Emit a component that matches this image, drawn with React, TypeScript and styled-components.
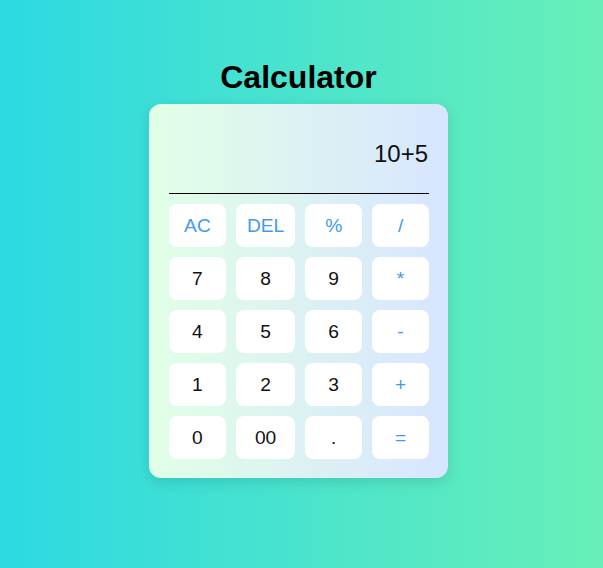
import React from "react";
import styled, { createGlobalStyle } from "styled-components";

const Global = createGlobalStyle`
  html, body { margin: 0; padding: 0; }
  body {
    font-family: "Liberation Sans", Arial, sans-serif;
    background: linear-gradient(to right, #2cd9e2, #68efb8);
    min-height: 568px;
  }
`;

const Page = styled.main`
  min-height: 568px;
  display: flex;
  flex-direction: column;
  align-items: center;
  padding: 59px 6px 0 0;
  box-sizing: border-box;
`;

const Title = styled.h1`
  margin: 0 0 8px;
  font-size: 32px;
  line-height: 37px;
  font-weight: 700;
  color: #000;
`;

const Card = styled.div`
  width: 299px;
  box-sizing: border-box;
  padding: 20px 19px 19px 20px;
  border-radius: 12px;
  background: linear-gradient(to right, #e1ffe6, #d8e5ff);
  box-shadow: 0 4px 14px rgba(0, 0, 0, 0.12);
`;

const Display = styled.div`
  padding: 16px 1px 25px 0;
  text-align: right;
  font-size: 24px;
  line-height: 28px;
  color: #111;
  border-bottom: 1px solid #000;
  margin-bottom: 10px;
`;

const Keys = styled.div`
  display: grid;
  grid-template-columns: repeat(4, 1fr);
  gap: 10px;
`;

const Key = styled.button<{ $op?: boolean }>`
  font-family: "Liberation Sans", Arial, sans-serif;
  font-size: 19.2px;
  line-height: 23px;
  padding: 10px 11px;
  border: none;
  border-radius: 8px;
  background: #fff;
  color: ${(p) => (p.$op ? "#409bee" : "#111")};
  cursor: pointer;
`;

const keys: { label: string; op?: boolean }[] = [
  { label: "AC", op: true },
  { label: "DEL", op: true },
  { label: "%", op: true },
  { label: "/", op: true },
  { label: "7" },
  { label: "8" },
  { label: "9" },
  { label: "*", op: true },
  { label: "4" },
  { label: "5" },
  { label: "6" },
  { label: "-", op: true },
  { label: "1" },
  { label: "2" },
  { label: "3" },
  { label: "+", op: true },
  { label: "0" },
  { label: "00" },
  { label: "." },
  { label: "=", op: true },
];

export default function App() {
  return (
    <>
      <Global />
      <Page>
        <Title>Calculator</Title>
        <Card>
          <Display>10+5</Display>
          <Keys>
            {keys.map((k) => (
              <Key key={k.label} $op={k.op}>
                {k.label}
              </Key>
            ))}
          </Keys>
        </Card>
      </Page>
    </>
  );
}
